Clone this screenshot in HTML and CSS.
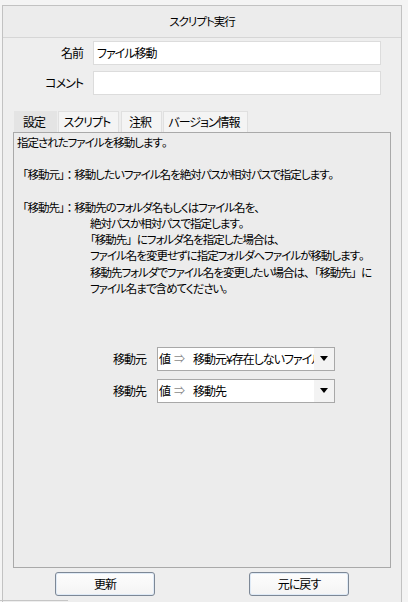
FILE: index.html
```html
<!DOCTYPE html>
<html lang="ja">
<head>
<meta charset="utf-8">
<title>スクリプト実行</title>
<link rel="stylesheet" href="styles.css">
</head>
<body>
<div class="panel">
  <div class="header">スクリプト実行</div>
  <div class="form">
    <div class="row"><span class="lbl">名前</span><div class="input">ファイル移動</div></div>
    <div class="row"><span class="lbl">コメント</span><div class="input"></div></div>
  </div>
  <div class="tabs">
    <div class="tab tab-setting active">設定</div>
    <div class="tab tab-script">スクリプト</div>
    <div class="tab tab-note">注釈</div>
    <div class="tab tab-version">バージョン情報</div>
  </div>
  <div class="tabbody">
    <div class="desc">
      <p class="line">指定されたファイルを移動します<span class="fw">。</span></p>
      <p class="line"></p>
      <p class="line"><span class="fw">「移動元」：</span>移動したいファイル名を絶対パスか相対パスで指定します<span class="fw">。</span></p>
      <p class="line"></p>
      <p class="line"><span class="fw">「移動先」：</span>移動先のフォルダ名もしくはファイル名を<span class="fw">、</span></p>
      <p class="line indent">絶対パスか相対パスで指定します<span class="fw">。</span></p>
      <p class="line indent">「移動先<span class="fw">」</span>にフォルダ名を指定した場合は<span class="fw">、</span></p>
      <p class="line indent">ファイル名を変更せずに指定フォルダへファイルが移動します<span class="fw">。</span></p>
      <p class="line indent">移動先フォルダでファイル名を変更したい場合は<span class="fw">、「</span>移動先<span class="fw">」</span>に</p>
      <p class="line indent">ファイル名まで含めてください<span class="fw">。</span></p>
    </div>
    <div class="combos">
      <span class="clbl">移動元</span>
      <div class="combo">
        <div class="cval"><span class="vk">値</span><span class="arrow">⇒</span><span class="vtext">移動元¥存在しないファイル名.txt</span></div>
        <div class="drop"><span class="tri"></span></div>
      </div>
      <span class="clbl">移動先</span>
      <div class="combo">
        <div class="cval"><span class="vk">値</span><span class="arrow">⇒</span><span class="vtext">移動先</span></div>
        <div class="drop"><span class="tri"></span></div>
      </div>
    </div>
  </div>
  <div class="buttons">
    <button class="btn">更新</button>
    <button class="btn">元に戻す</button>
  </div>
</div>
<div class="edge"></div>
</body>
</html>
```

FILE: styles.css
```css
* { box-sizing: border-box; }
html, body {
  margin: 0;
  padding: 0;
  height: 602px;
  overflow: hidden;
}
body {
  background: #f4f4f4;
  padding-top: 5px;
  padding-left: 2px;
  font-family: "Noto Sans CJK JP", "Noto Sans", sans-serif;
  font-feature-settings: "palt";
  font-size: 11.5px;
  letter-spacing: -1px;
  color: #000;
}
.fw { font-feature-settings: normal; }
.panel {
  width: 400px;
  height: 600px;
  background: #eeeeee;
  border: 1px solid #c2c2c2;
  border-bottom: none;
}
.header {
  height: 32px;
  border-bottom: 1px solid #d6d6d6;
  background: #ececec;
  display: flex;
  align-items: center;
  justify-content: center;
  padding-bottom: 2px;
  line-height: 16px;
}
.form {
  padding-top: 3px;
  display: flex;
  flex-direction: column;
  gap: 6px;
}
.row {
  display: flex;
  align-items: center;
  gap: 10px;
  height: 24px;
}
.lbl {
  width: 80px;
  text-align: right;
  line-height: 16px;
  font-size: 12px;
}
.input {
  width: 288px;
  height: 24px;
  background: #fff;
  border: 1px solid #dcdcdc;
  padding: 2px 3px;
  line-height: 18px;
  font-size: 12px;
}
.tabs {
  margin-top: 16px;
  margin-left: 11px;
  display: flex;
  height: 21px;
}
.tab {
  height: 21px;
  background: #f4f4f4;
  border: 1px solid #e0e0e0;
  border-bottom: none;
  display: flex;
  align-items: center;
  justify-content: center;
  line-height: 16px;
  margin-right: 1px;
  font-size: 12px;
  padding-right: 3px;
}
.tab.active {
  background: #e4e4e4;
  border-color: #e4e4e4;
}
.tab-setting { width: 43px; }
.tab-script { width: 61px; margin-right: 2px; }
.tab-note { width: 41px; margin-right: 1px; }
.tab-version { width: 85px; }
.tabbody {
  margin-left: 10px;
  width: 378px;
  height: 436px;
  border: 1px solid #a9a9a9;
  background: #ececec;
  padding: 1px 3px 0 3px;
}
.desc .line {
  margin: 0;
  height: 16.2px;
  line-height: 16.2px;
  white-space: nowrap;
}
.desc .indent {
  padding-left: 73px;
}
.combos {
  margin-top: 51px;
  margin-left: 90px;
  display: grid;
  grid-template-columns: 39px 178px;
  column-gap: 11px;
  row-gap: 8px;
  align-items: center;
}
.clbl {
  text-align: right;
  line-height: 16px;
  padding-top: 1px;
  font-size: 12px;
}
.combo {
  height: 24px;
  border: 1px solid #a8a8a8;
  background: #fff;
  display: flex;
}
.cval {
  flex: 1;
  overflow: hidden;
  white-space: nowrap;
  line-height: 21px;
  padding-left: 1px;
  display: flex;
  font-size: 12px;
}
.arrow {
  color: #8a8a8a;
  margin-left: 4px;
  margin-right: 8px;
  font-size: 11px;
  letter-spacing: 0;
}
.vtext { white-space: nowrap; }
.drop {
  width: 20px;
  background: #f3f3f3;
  display: flex;
  align-items: center;
  justify-content: center;
}
.tri {
  width: 0;
  height: 0;
  border-left: 4px solid transparent;
  border-right: 4px solid transparent;
  border-top: 5px solid #000;
}
.buttons {
  margin-top: 4px;
  padding-left: 52px;
  display: flex;
  gap: 94px;
}
.btn {
  width: 100px;
  height: 24px;
  font: inherit;
  font-size: 12px;
  letter-spacing: inherit;
  font-feature-settings: inherit;
  color: #000;
  line-height: 16px;
  padding: 0;
  background: linear-gradient(#fdfdfd, #f4f4f4);
  border: 1px solid #7d8896;
  border-radius: 3px;
  box-shadow: inset 0 0 0 1px #dfeaf6;
}
.edge {
  position: fixed;
  left: 0;
  top: 600px;
  width: 68px;
  height: 1px;
  background: #c6c6c6;
}
```
